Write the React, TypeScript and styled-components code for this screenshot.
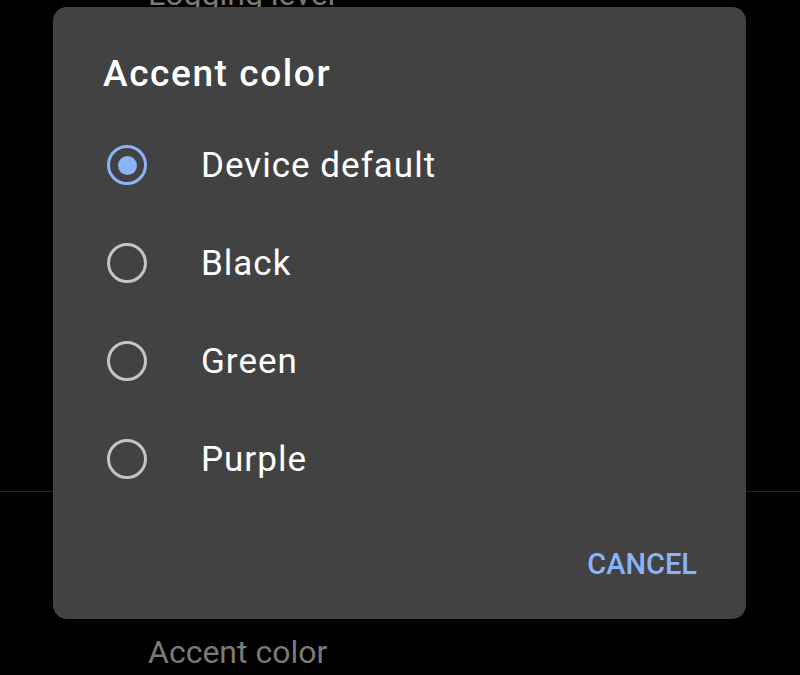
import React from "react";
import styled, { createGlobalStyle } from "styled-components";

const Global = createGlobalStyle`
  html, body { margin: 0; padding: 0; background: #000; }
  body { font-family: Roboto, "Noto Sans", "Liberation Sans", sans-serif; overflow: hidden; }
  #root { width: 800px; height: 675px; position: relative; overflow: hidden; }
`;

const Screen = styled.div`
  width: 800px;
  height: 675px;
  background: #000;
  display: flex;
  flex-direction: column;
`;

const SettingTitle = styled.div<{ $mt: number }>`
  margin-top: ${(p) => p.$mt}px;
  padding-left: 148px;
  font-size: 32px;
  line-height: 1;
  color: #7a7a7a;
`;

const Divider = styled.div<{ $mt: number }>`
  margin-top: ${(p) => p.$mt}px;
  height: 1px;
  background: #262626;
`;

const Scrim = styled.div`
  position: absolute;
  inset: 0;
`;

const Dialog = styled.div`
  position: absolute;
  left: 53px;
  top: 7px;
  width: 693px;
  height: 612px;
  box-sizing: border-box;
  background: #424242;
  border-radius: 14px;
  padding: 48px 49px 0 0;
  display: flex;
  flex-direction: column;
`;

const Title = styled.div`
  padding-left: 50px;
  font-size: 37px;
  font-weight: 500;
  letter-spacing: 1.6px;
  line-height: 37px;
  color: #fff;
`;

const Options = styled.div`
  margin-top: 24px;
  display: flex;
  flex-direction: column;
`;

const Option = styled.div`
  height: 98px;
  display: flex;
  align-items: center;
  padding-left: 54px;
  gap: 54px;
`;

const Radio = styled.div<{ $checked: boolean }>`
  width: 40px;
  height: 40px;
  box-sizing: border-box;
  border-radius: 50%;
  border: 3.5px solid ${(p) => (p.$checked ? "#8ab4f8" : "#c4c4c4")};
  display: flex;
  align-items: center;
  justify-content: center;
  &::after {
    content: "";
    display: ${(p) => (p.$checked ? "block" : "none")};
    width: 19px;
    height: 19px;
    border-radius: 50%;
    background: #8ab4f8;
  }
`;

const Label = styled.div`
  font-size: 35px;
  letter-spacing: 1px;
  color: #fff;
  line-height: 1;
`;

const Actions = styled.div`
  margin-top: auto;
  height: 112px;
  display: flex;
  justify-content: flex-end;
  align-items: flex-start;
  padding-top: 42px;
  box-sizing: border-box;
`;

const TextButton = styled.div`
  font-size: 29px;
  font-weight: 500;
  letter-spacing: 0;
  color: #8ab4f8;
  line-height: 1;
`;

const options = ["Device default", "Black", "Green", "Purple"];

export default function App() {
  return (
    <>
      <Global />
      <Screen>
        <SettingTitle $mt={-22}>Logging level</SettingTitle>
        <Divider $mt={481} />
        <SettingTitle $mt={144}>Accent color</SettingTitle>
      </Screen>
      <Scrim>
        <Dialog>
          <Title>Accent color</Title>
          <Options>
            {options.map((o, i) => (
              <Option key={o}>
                <Radio $checked={i === 0} />
                <Label>{o}</Label>
              </Option>
            ))}
          </Options>
          <Actions>
            <TextButton>CANCEL</TextButton>
          </Actions>
        </Dialog>
      </Scrim>
    </>
  );
}
